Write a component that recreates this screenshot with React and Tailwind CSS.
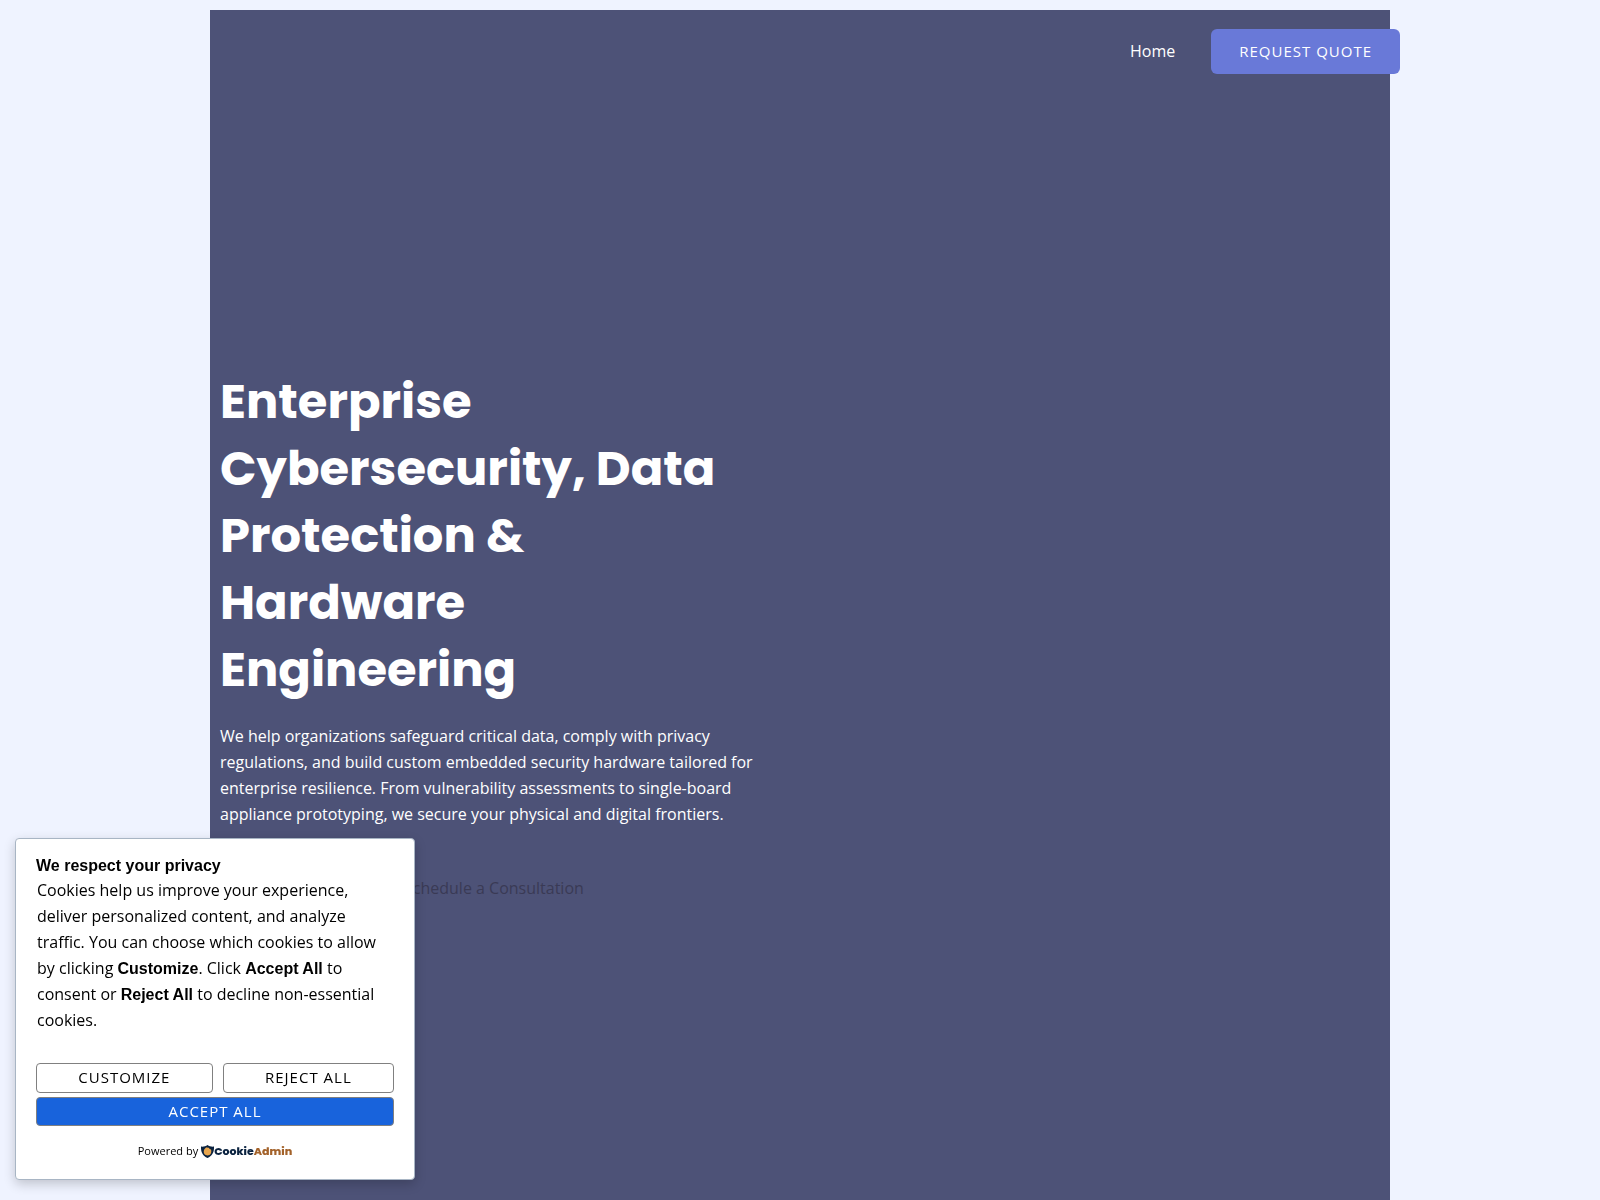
import React from 'react';

const navLinks = [{ label: 'Home', href: '#home' }];

const ShieldLogo = () => (
  <svg viewBox="0 0 26 26" className="h-[13px] w-[13px] shrink-0" aria-hidden="true">
    <path
      d="M13 0C9.500 2.600 5.500 3.600 0 3.200C-.5 12.500 2.500 21.500 13 26C23.500 21.500 26.500 12.500 26 3.200C20.500 3.600 16.500 2.600 13 0Z"
      fill="#0b2340"
    />
    <path
      d="M12 4.500C13.500 6 14.500 5.500 16 5.500C16.500 7.500 18 9 20 9C22 15 19 21 13 21C7.500 21 5 16.500 5.500 12.500C6 8.500 8.500 5.300 12 4.500Z"
      fill="#e8a64e"
    />
  </svg>
);

const Header = () => {
  return (
    <header className="flex justify-end items-center gap-9 pt-[19px] -mr-2.5">
      <nav className="leading-[25px]">
        {navLinks.map((link) => (
          <a key={link.label} href={link.href} className="text-white hover:underline">
            {link.label}
          </a>
        ))}
      </nav>
      <button
        type="button"
        className="bg-[#6979d8] text-white text-[15px] leading-[15px] tracking-[1px] uppercase rounded-md px-7 py-[15px]"
      >
        Request Quote
      </button>
    </header>
  );
};

const Hero = () => {
  return (
    <section className="px-2.5 pt-[294px] pb-20">
      <div className="max-w-[540px]">
        <h1 className="font-['Poppins','Inter',sans-serif] font-bold text-[48px] leading-[67px] text-white">
          Enterprise Cybersecurity, Data Protection &amp; Hardware Engineering
        </h1>
        <p className="mt-5 text-white">
          We help organizations safeguard critical data, comply with privacy
          regulations, and build custom embedded security hardware tailored for
          enterprise resilience. From vulnerability assessments to single-board
          appliance prototyping, we secure your physical and digital frontiers.
        </p>
        <div className="mt-12 pl-46">
          <a href="#consultation" className="text-[#3a3a55]">
            Schedule a Consultation
          </a>
        </div>
      </div>
    </section>
  );
};

const CookieBanner = () => {
  return (
    <aside
      aria-label="Cookie notice"
      className="fixed bottom-5 left-[15px] w-[400px] max-w-full bg-white text-black border border-[#a8b5c4] rounded shadow-[0_4px_12px_rgba(0,0,0,0.2)] px-5 pt-4 pb-[15px]"
    >
      <h2 className="font-['Liberation_Sans',sans-serif] font-bold leading-[22px]">
        We respect your privacy
      </h2>
      <p className="pl-px">
        Cookies help us improve your experience, deliver personalized content,
        and analyze traffic. You can choose which cookies to allow by clicking{' '}
        <b className="font-['Liberation_Sans',sans-serif] leading-none">Customize</b>. Click{' '}
        <b className="font-['Liberation_Sans',sans-serif] leading-none">Accept All</b> to
        consent or{' '}
        <b className="font-['Liberation_Sans',sans-serif] leading-none">Reject All</b> to
        decline non-essential cookies.
      </p>

      {/* Consent buttons */}
      <div className="mt-[30px] flex flex-wrap gap-x-2.5 gap-y-1 text-[15px] leading-[26px] tracking-[1px]">
        <button type="button" className="grow px-10 pb-0.5 border border-[#808080] rounded uppercase">
          Customize
        </button>
        <button type="button" className="grow px-10 pb-0.5 border border-[#808080] rounded uppercase">
          Reject All
        </button>
        <button
          type="button"
          className="w-full pb-px bg-[#1863dc] text-white border border-[#808080] rounded uppercase"
        >
          Accept All
        </button>
      </div>

      <div className="mt-3 flex justify-center items-center gap-[3px] text-[11px]">
        <span>Powered by</span>
        <a href="#cookieadmin" className="flex items-center font-['Poppins','Lato',sans-serif] font-extrabold text-[11px]">
          <ShieldLogo />
          <span className="text-[#0b2340]">Cookie</span>
          <span className="text-[#a3622a]">Admin</span>
        </a>
      </div>
    </aside>
  );
};

const App = () => {
  return (
    <div className="min-h-screen bg-[#eff3ff] font-['Open_Sans',sans-serif] text-base leading-[26px]">
      <div className="mx-auto max-w-[1200px] px-2.5 pt-2.5">
        <main className="min-h-[calc(100vh-10px)] bg-[#4d5277]">
          <Header />
          <Hero />
        </main>
      </div>
      <CookieBanner />
    </div>
  );
};

export default App;
